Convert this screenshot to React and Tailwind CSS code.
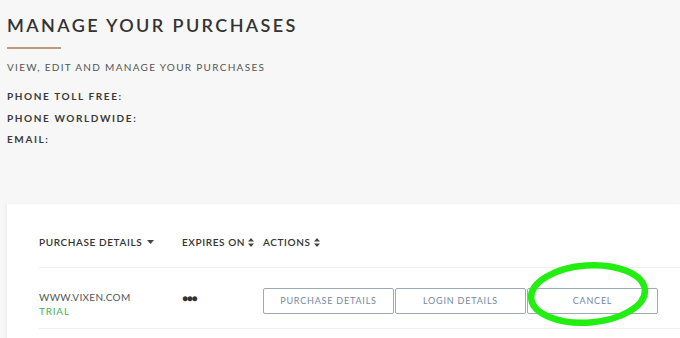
import React from "react";

function SortIcon() {
  return (
    <svg width="6" height="9" viewBox="0 0 6 9" className="ml-[3px] inline-block">
      <path d="M3 0L6 3.5H0z M3 9L0 5.5H6z" fill="#444" />
    </svg>
  );
}

function CaretDown() {
  return (
    <svg width="7" height="4" viewBox="0 0 7 4" className="ml-[5px] inline-block">
      <path d="M0 0H7L3.5 4z" fill="#444" />
    </svg>
  );
}

function ActionButton({ label }) {
  return (
    <button className="h-[26px] w-[131px] rounded-[2px] border border-[#9aaabb] bg-white text-[9px] tracking-[0.8px] text-[#7688a0]">
      {label}
    </button>
  );
}

export default function App() {
  const contacts = ["PHONE TOLL FREE:", "PHONE WORLDWIDE:", "EMAIL:"];

  return (
    <div className="relative h-[338px] w-[680px] overflow-hidden bg-[#f7f7f7] font-['Lato',sans-serif]">
      <div className="px-[7px] pt-[15px]">
        <h1 className="text-[18px] leading-[20px] font-semibold tracking-[2.4px] text-[#333]">
          MANAGE YOUR PURCHASES
        </h1>
        <div className="mt-[12px] h-[2px] w-[54px] bg-[#c09a80]" />
        <p className="mt-[12px] text-[10px] leading-[12px] tracking-[1.3px] text-[#555]">
          VIEW, EDIT AND MANAGE YOUR PURCHASES
        </p>
        <div className="mt-[17px] flex flex-col gap-[9.5px]">
          {contacts.map((c) => (
            <p key={c} className="text-[10px] leading-[12px] font-bold tracking-[1.6px] text-[#3a3a3a]">
              {c}
            </p>
          ))}
        </div>
      </div>

      <div className="mt-[59px] ml-[7px] h-[140px] bg-white pl-[32px] shadow-[-1px_0_3px_rgba(0,0,0,0.06)]">
        <div className="flex h-[64px] items-end border-b border-[#efefef] pb-[19px] text-[10px] leading-[12px] font-semibold tracking-[0.6px] text-[#333]">
          <div className="flex w-[143px] items-center">
            PURCHASE DETAILS
            <CaretDown />
          </div>
          <div className="flex w-[81px] items-center">
            EXPIRES ON
            <SortIcon />
          </div>
          <div className="flex items-center">
            ACTIONS
            <SortIcon />
          </div>
        </div>
        <div className="flex h-[61px] items-center border-b border-[#efefef] pt-[5px]">
          <div className="w-[143px] pt-[7px]">
            <p className="text-[10px] leading-[14px] tracking-[0.3px] text-[#555]">WWW.VIXEN.COM</p>
            <p className="text-[10px] leading-[14px] tracking-[0.8px] text-[#4caf50]">TRIAL</p>
          </div>
          <div className="w-[81px] pb-[4px] text-[10px] tracking-[-1.2px] text-[#333]">●●●</div>
          <div className="flex gap-[1px]">
            <ActionButton label="PURCHASE DETAILS" />
            <ActionButton label="LOGIN DETAILS" />
            <ActionButton label="CANCEL" />
          </div>
        </div>
      </div>

      <svg className="absolute top-[260px] left-[524px]" width="130" height="70" viewBox="0 0 130 70">
        <ellipse cx="64" cy="34" rx="57" ry="28.5" fill="none" stroke="#22ee11" strokeWidth="6.5" transform="rotate(-4 64 34)" />
      </svg>
    </div>
  );
}
